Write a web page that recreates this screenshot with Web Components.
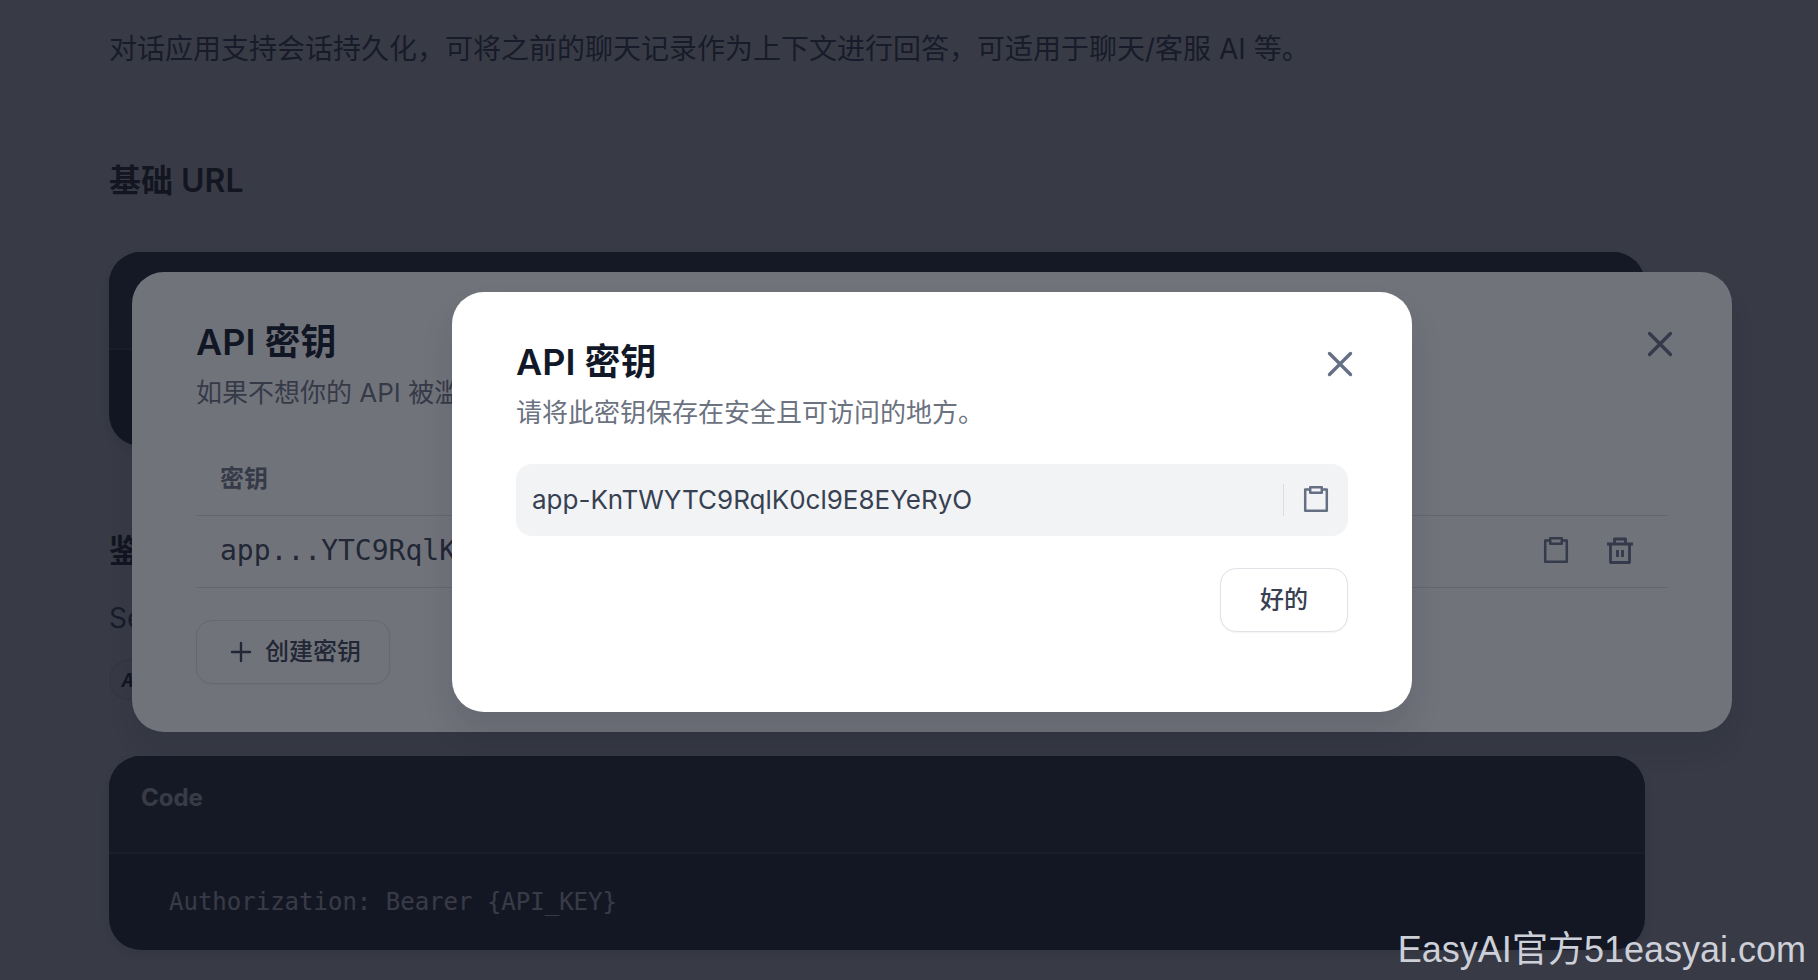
<!DOCTYPE html>
<html lang="zh-CN">
<head>
<meta charset="utf-8">
<meta name="viewport" content="width=device-width, initial-scale=1">
<title>API 密钥</title>
<style>
  body {
    margin: 0;
    background: #fff;
    color: #3b3b4c;
    font-family: Inter, "Noto Sans CJK SC", sans-serif;
    font-size: 28px;
  }
</style>
</head>
<body>
<api-app></api-app>

<template id="ui-icon">
  <style>
    :host { display: inline-flex; width: 32px; height: 32px; flex: none; }
    svg { width: 100%; height: 100%; fill: none; stroke: currentColor; stroke-width: 2; }
  </style>
  <svg viewBox="0 0 32 32" aria-hidden="true"></svg>
</template>

<template id="ui-button">
  <style>
    :host { display: inline-flex; }
    button {
      display: flex; align-items: center; justify-content: center; gap: 8px;
      min-width: 128px; height: 64px; padding: 0 28px; box-sizing: border-box;
      border: 1px solid #e0e2e7; border-radius: 16px; background: #fff;
      color: #374151; font: 500 24px/32px Inter, "Noto Sans CJK SC", sans-serif;
      box-shadow: 0 1px 2px rgba(17, 24, 39, .05);
    }
  </style>
  <button type="button"><slot></slot></button>
</template>

<template id="icon-button">
  <style>
    :host { display: inline-flex; }
    button {
      display: flex; padding: 0; border: 0; background: none; color: #667085;
    }
  </style>
  <button type="button"><slot></slot></button>
</template>

<template id="code-card">
  <style>
    :host {
      display: block; border-radius: 32px; overflow: hidden; background: #18202a;
      box-shadow: 0 4px 12px rgba(17, 24, 39, .15);
    }
    header {
      height: 98px; padding: 26px 32px; box-sizing: border-box;
      border-bottom: 2px solid #3c4450; background: #28303a;
      color: #fff; font-size: 24px; line-height: 32px; font-weight: 700;
    }
    pre {
      margin: 0; height: 96px; padding: 30px 60px; box-sizing: border-box;
      color: #fff; font: 24px/36px "DejaVu Sans Mono", monospace;
    }
  </style>
  <header>Code</header>
  <pre><slot></slot></pre>
</template>

<template id="doc-page">
  <style>
    :host { display: block; padding: 24px 173px 30px 109px; }
    p { margin: 0; line-height: 40px; }
    .intro { line-height: 50px; margin-bottom: 86px; }
    h2 { margin: 0 0 50px; font-size: 32px; line-height: 42px; font-weight: 600; color: #18181b; }
    h2.auth { margin: 84px 0 26px; }
    .badge { margin: 22px 0 56px; display: flex; }
    code {
      box-sizing: border-box; height: 40px; padding: 0 12px; border: 1px solid #d4d4d8;
      border-radius: 20px; background: #fafafa; color: #18181b;
      font: italic 700 20px/38px "DejaVu Sans Mono", monospace;
    }
  </style>
  <p class="intro">对话应用支持会话持久化，可将之前的聊天记录作为上下文进行回答，可适用于聊天/客服 AI 等。</p>
  <h2>基础 URL</h2>
  <code-card></code-card>
  <h2 class="auth">鉴权</h2>
  <p>Service API</p>
  <p class="badge"><code>API-Key</code></p>
  <code-card>Authorization: Bearer {API_KEY}</code-card>
</template>

<template id="modal-dialog">
  <style>
    :host {
      position: absolute; inset: 0; box-sizing: border-box; padding: 24px 86px 0 132px;
      display: grid; align-items: center; justify-items: center;
      background: rgba(18, 22, 35, .6);
    }
    section {
      width: 100%; max-width: var(--modal-width, 1600px); box-sizing: border-box;
      padding: 48px 64px; border-radius: 32px; background: #fff;
      box-shadow: 0 20px 32px rgba(17, 24, 39, .12);
    }
    header { display: flex; justify-content: space-between; align-items: flex-start; height: 48px; margin-right: -8px; }
    icon-button { align-self: center; }
    h1 { margin: 0; font-size: 36px; line-height: 44px; font-weight: 600; color: #111827; }
    p { margin: 4px 0 0; font-size: 26px; line-height: 42px; color: #6b7280; }
  </style>
  <section role="dialog" aria-labelledby="title">
    <header>
      <h1 id="title">API 密钥</h1>
      <icon-button label="关闭"><ui-icon name="close"></ui-icon></icon-button>
    </header>
    <p><slot name="description"></slot></p>
    <slot></slot>
  </section>
</template>

<template id="key-list">
  <style>
    :host { display: block; margin-top: 28px; }
    table { width: 100%; border-collapse: collapse; margin-bottom: 32px; }
    th, td { height: 72px; padding: 0 24px; text-align: left; box-sizing: border-box; border-bottom: 1px solid #dfe1e6; }
    th { height: 73px; font-size: 24px; line-height: 32px; font-weight: 600; color: #6b7280; }
    td { font: 28px/40px "DejaVu Sans Mono", monospace; color: #374151; }
    .actions { display: flex; justify-content: flex-end; gap: 32px; padding-right: 8px; }
  </style>
  <table>
    <thead><tr><th scope="col">密钥</th><th></th></tr></thead>
    <tbody>
      <tr>
        <td>app...YTC9RqlK0cl9E8EYeRyO</td>
        <td>
          <div class="actions">
            <icon-button label="复制"><ui-icon name="clipboard"></ui-icon></icon-button>
            <icon-button label="删除"><ui-icon name="trash"></ui-icon></icon-button>
          </div>
        </td>
      </tr>
    </tbody>
  </table>
  <ui-button><ui-icon name="plus"></ui-icon>创建密钥</ui-button>
</template>

<template id="new-key">
  <style>
    :host { display: block; margin: 30px 0 32px; }
    .field { display: flex; align-items: center; height: 72px; padding: 0 16px; box-sizing: border-box; border-radius: 16px; background: #f2f3f5; }
    input {
      flex: 1; min-width: 0; padding: 0; border: 0; outline: 0; background: none;
      color: #374151; font: 26px/40px Inter, "Noto Sans CJK SC", sans-serif;
    }
    .rule { width: 1px; height: 32px; margin-right: 16px; background: #d9dee5; }
    footer { display: flex; justify-content: flex-end; margin-top: 32px; }
  </style>
  <div class="field">
    <input type="text" readonly aria-label="API 密钥" value="app-KnTWYTC9RqlK0cl9E8EYeRyO">
    <span class="rule"></span>
    <icon-button label="复制"><ui-icon name="clipboard"></ui-icon></icon-button>
  </div>
  <footer><ui-button>好的</ui-button></footer>
</template>

<template id="site-mark">
  <style>
    :host {
      position: absolute; right: 12px; bottom: 6px;
      color: #cdd0d8; font: 36px/48px "Liberation Sans", "Noto Sans CJK SC", sans-serif;
    }
  </style>
  <slot></slot>
</template>

<template id="api-app">
  <style>
    :host { display: block; position: relative; min-height: 100vh; overflow: hidden; }
    .small { --modal-width: 960px; }
  </style>
  <doc-page></doc-page>
  <modal-dialog>
    <span slot="description">如果不想你的 API 被滥用</span>
    <key-list></key-list>
  </modal-dialog>
  <modal-dialog class="small">
    <span slot="description">请将此密钥保存在安全且可访问的地方。</span>
    <new-key></new-key>
  </modal-dialog>
  <site-mark>EasyAI官方51easyai.com</site-mark>
</template>

<script>
  class TemplateElement extends HTMLElement {
    constructor() {
      super();
      const template = document.getElementById(this.localName);
      this.attachShadow({ mode: "open" }).append(template.content.cloneNode(true));
    }
  }

  const ICONS = {
    close: '<path d="M5.500 5.500 26.500 26.500M26.500 5.500 5.500 26.500" stroke-width="3.400" stroke-linecap="round"/>',
    plus: '<path d="M16 7V25M7 16H25" stroke-width="2.400" stroke-linecap="round"/>',
    clipboard: '<path d="M10 5.500H5.200V26.800H26.800V5.500H22" stroke-width="2.500" stroke-linejoin="round"/><path d="M10.200 3.200H21.800V8.800H10.200Z" stroke-width="2.500" stroke-linejoin="round"/>',
    trash: '<path d="M3 9H29M6.500 9V27.500H25.500V9M10.500 9V4H21.500V9M13.500 15V22M18.500 15V22" stroke-width="2.800" stroke-linejoin="round"/>'
  };

  class UiIcon extends TemplateElement {
    connectedCallback() {
      this.shadowRoot.querySelector("svg").innerHTML = ICONS[this.getAttribute("name")];
    }
  }

  class IconButton extends TemplateElement {
    connectedCallback() {
      this.shadowRoot.querySelector("button").setAttribute("aria-label", this.getAttribute("label"));
    }
  }

  customElements.define("ui-icon", UiIcon);
  customElements.define("icon-button", IconButton);
  for (const name of ["ui-button", "code-card", "doc-page", "modal-dialog", "key-list", "new-key", "site-mark", "api-app"]) {
    customElements.define(name, class extends TemplateElement {});
  }
</script>
</body>
</html>
